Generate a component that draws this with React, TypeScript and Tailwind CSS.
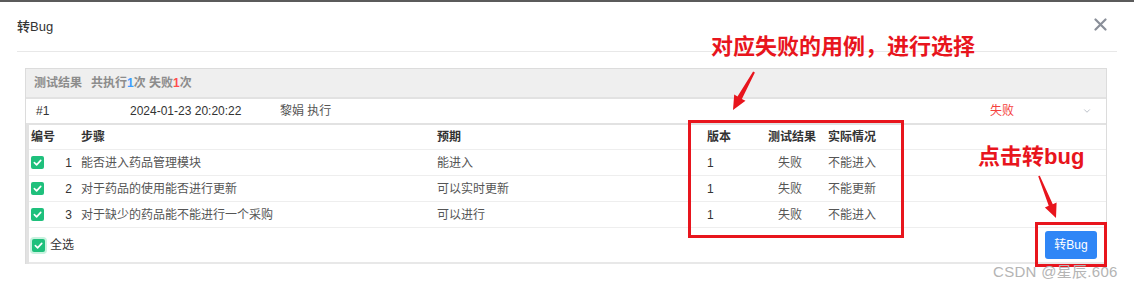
import { ChevronDown } from "lucide-react"

const rows = [
  { no: 1, step: "能否进入药品管理模块", expect: "能进入", ver: "1", result: "失败", actual: "不能进入" },
  { no: 2, step: "对于药品的使用能否进行更新", expect: "可以实时更新", ver: "1", result: "失败", actual: "不能更新" },
  { no: 3, step: "对于缺少的药品能不能进行一个采购", expect: "可以进行", ver: "1", result: "失败", actual: "不能进入" },
]

function Check({ ring }: { ring?: boolean }) {
  return (
    <span className={`flex h-[13px] w-[13px] items-center justify-center rounded-[2px] bg-[#1fc07c] ${ring ? "ring-[2px] ring-[#c9f2df]" : ""}`}>
      <svg width="9" height="9" viewBox="0 0 10 10" fill="none">
        <path d="M1.5 5.2 L4 7.6 L8.6 2.6" stroke="white" strokeWidth="1.8" strokeLinecap="round" strokeLinejoin="round" />
      </svg>
    </span>
  )
}

export default function App() {
  return (
    <div className="relative h-[289px] w-[1134px] overflow-hidden bg-white font-['Liberation_Sans','Noto_Sans_CJK_SC',sans-serif] text-[12px] text-[#555]">
      <div className="h-[2px] bg-[#5b5b5b]" />

      {/* dialog head */}
      <div className="mx-[17px] flex h-[50px] items-center justify-between border-b border-[#e8e8e8]">
        <span className="text-[13px] font-medium text-[#333]">转Bug</span>
        <svg width="13" height="13" viewBox="0 0 13 13" className="mr-[10px] mt-[-5px]">
          <path d="M1.5 1.5 L11.5 11.5 M11.5 1.5 L1.5 11.5" stroke="#8a8f99" strokeWidth="2.2" strokeLinecap="round" />
        </svg>
      </div>

      <div className="pl-[25px] pr-[27px] pt-[16px]">
        <div className="border border-b-0 border-[#dcdcdc]">
          <div className="flex h-[28px] items-center gap-[9px] bg-[#efefef] px-[8px] font-bold text-[#8c8c8c]">
            <span>测试结果</span>
            <span>
              共执行<span className="text-[#3d9cff]">1</span>次 失败<span className="text-[#ff4d4f]">1</span>次
            </span>
          </div>
          <div className="h-[2px] bg-[#e2e2e2]" />
          <div className="flex h-[24px] items-center text-[#333]">
            <span className="w-[104px] pl-[10px]">#1</span>
            <span className="w-[150px]">2024-01-23 20:20:22</span>
            <span className="w-[710px] text-[#555]">黎娟 执行</span>
            <span className="w-[92px] text-[#f5403c]">失败</span>
            <ChevronDown size={10} strokeWidth={1.6} className="text-[#9aa1ad]" />
          </div>

          <div className="border-l-[3px] border-t-[2px] border-[#e2e2e2] bg-white">
            <div className="flex h-[25px] items-center border-b border-[#eeeeee] font-bold text-[#333]">
              <span className="w-[52px] pl-[2px]">编号</span>
              <span className="w-[356px]">步骤</span>
              <span className="w-[270px]">预期</span>
              <span className="w-[61px]">版本</span>
              <span className="w-[60px]">测试结果</span>
              <span>实际情况</span>
            </div>
            {rows.map((r) => (
              <div key={r.no} className="flex h-[26px] items-center border-b border-[#eeeeee]">
                <span className="flex w-[52px] items-center justify-between pl-[2px] pr-[9px] text-[#333]">
                  <Check />
                  <span>{r.no}</span>
                </span>
                <span className="w-[356px]">{r.step}</span>
                <span className="w-[270px]">{r.expect}</span>
                <span className="w-[61px] text-[#333]">{r.ver}</span>
                <span className="w-[60px]">
                  <span className="block w-[44px] text-center">{r.result}</span>
                </span>
                <span>{r.actual}</span>
              </div>
            ))}
            <div className="flex h-[36px] items-center justify-between border-b-[2px] border-[#e8e8e8] pl-[3px] pr-[9px]">
              <span className="flex items-center gap-[5px] text-[#333]">
                <Check ring />
                全选
              </span>
              <button className="h-[28px] w-[52px] rounded-[3px] bg-[#2f86f6] text-[12px] text-white">转Bug</button>
            </div>
          </div>
        </div>
      </div>

      {/* annotations */}
      <div className="absolute left-[711px] top-[33px] text-[22px] font-bold leading-[28px] text-[#e8151d]">对应失败的用例，进行选择</div>
      <div className="absolute left-[978px] top-[143px] text-[22px] font-bold leading-[28px] text-[#e8151d]">点击转bug</div>
      <div className="absolute left-[688px] top-[120px] h-[118px] w-[216px] border-[3px] border-[#e8151d]" />
      <div className="absolute left-[1035px] top-[222px] h-[45px] w-[72px] border-[3px] border-[#e8151d]" />
      <svg className="pointer-events-none absolute left-0 top-0" width="1134" height="289">
        <polygon points="754.9,72.5 741.9,98.9 745.5,100.8 733,110 734.2,94.5 737.5,96.5 753.1,71.5" fill="#e8151d" />
        <polygon points="1039.8,175.7 1052.8,204.2 1056.6,202.6 1056,218 1044.9,207.4 1048.7,205.8 1038.2,176.3" fill="#e8151d" />
      </svg>
      <div className="absolute left-[993px] top-[263px] text-[15px] leading-[18px] tracking-[0.3px] text-[#b4b4b4]">CSDN @星辰.606</div>
    </div>
  )
}
